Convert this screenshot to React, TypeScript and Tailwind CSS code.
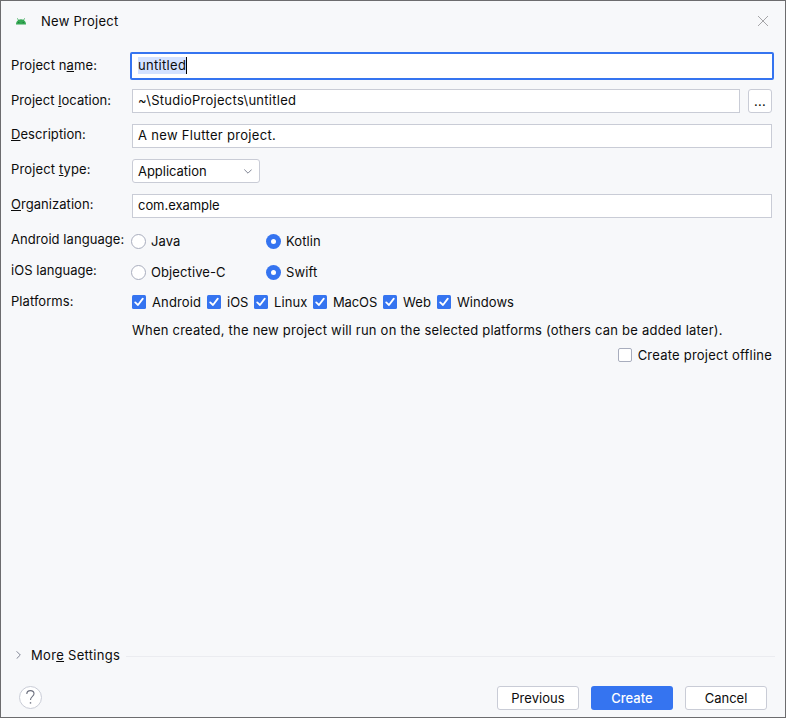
import React from "react";

function Label({ children, className = "" }: { children: React.ReactNode; className?: string }) {
  return <div className={`w-[121px] shrink-0 ${className}`}>{children}</div>;
}

function Key({ children }: { children: string }) {
  return (
    <span className="underline decoration-1 underline-offset-[1px] [text-decoration-skip-ink:none]">{children}</span>
  );
}

function Radio({ label, checked = false }: { label: string; checked?: boolean }) {
  return (
    <div className="flex h-4 w-[135px] items-center gap-[5px]">
      <svg width="15" height="15" viewBox="0 0 15 15" className="shrink-0">
        {checked ? (
          <>
            <circle cx="7.5" cy="7.5" r="7.5" fill="#3574f0" />
            <circle cx="7.5" cy="7.5" r="2.5" fill="#fff" />
          </>
        ) : (
          <circle cx="7.5" cy="7.5" r="7" fill="#fff" stroke="#a8adbd" />
        )}
      </svg>
      <span className="tracking-[0.1px]">{label}</span>
    </div>
  );
}

function Box({ checked = false }: { checked?: boolean }) {
  return (
    <svg width="14" height="14" viewBox="0 0 14 14" className="shrink-0">
      {checked ? (
        <>
          <rect width="14" height="14" rx="1.5" fill="#3574f0" />
          <path d="M3.2 7.4 6 10 10.8 3.6" fill="none" stroke="#fff" strokeWidth="1.8" strokeLinecap="round" strokeLinejoin="round" />
        </>
      ) : (
        <rect x="0.5" y="0.5" width="13" height="13" rx="1.5" fill="#fff" stroke="#a8adbd" />
      )}
    </svg>
  );
}

const platforms = [
  { name: "Android", width: "w-[75px]", tracking: "tracking-[0.12px]" },
  { name: "iOS", width: "w-[47px]", tracking: "tracking-[0px]" },
  { name: "Linux", width: "w-[59px]", tracking: "tracking-[0.08px]" },
  { name: "MacOS", width: "w-[70px]", tracking: "tracking-[-0.12px]" },
  { name: "Web", width: "w-[54px]", tracking: "tracking-[0.1px]" },
  { name: "Windows", width: "w-[80px]", tracking: "tracking-[0.05px]" },
];

export default function App() {
  return (
    <div className="flex h-[718px] w-[786px] flex-col border border-[#6c6c6e] bg-[#f7f8fa] font-['Inter',sans-serif] text-[13px] leading-4 tracking-[0.31px] whitespace-nowrap text-[#0c0c0c]">
      <header className="flex h-[40px] shrink-0 items-center pr-[17px] pl-[15px]">
        <svg width="10" height="7" viewBox="0 0 10 7" className="mt-px">
          <path d="M0 6.5C0 4.3 1 3 2 2.3L1 .3 1.4 0 2.6 1.8Q5 .9 7.4 1.8L8.6 0 9 .3 8 2.3C9 3 10 4.3 10 6.5Z" fill="#35a853" />
          <circle cx="2.8" cy="4.5" r=".6" fill="#176b34" />
          <circle cx="7.2" cy="4.5" r=".6" fill="#176b34" />
        </svg>
        <h1 className="ml-[15px] font-normal tracking-[0.27px]">New Project</h1>
        <svg width="10" height="10" viewBox="0 0 10 10" className="ml-auto" stroke="#a5a5a8" strokeWidth="1">
          <path d="M0 0 10 10M10 0 0 10" />
        </svg>
      </header>

      <main className="flex flex-col pt-[13px] pr-[13px] pl-[10px]">
        <div className="flex h-6 items-center">
          <Label className="mb-[3px] tracking-[0.12px]">Project n<Key>a</Key>me:</Label>
          <div className="-mx-[2px] flex h-7 flex-1 items-center rounded-[2px] border-2 border-[#3574f0] bg-white pl-[6px]">
            <span className="mb-px h-[17px] border-r border-black bg-[#d4e2ff]">untitled</span>
          </div>
        </div>
        <div className="mt-[11px] flex h-6 items-center">
          <Label className="mb-[3px] tracking-[0.05px]">Project <Key>l</Key>ocation:</Label>
          <div className="flex h-6 flex-1 items-center border border-[#c9ccd6] bg-white pb-[2px] pl-[5px] tracking-[0.27px]">~\StudioProjects\untitled</div>
          <button className="ml-2 h-6 w-6 rounded-[3px] border border-[#c9ccd6] bg-white">...</button>
        </div>
        <div className="mt-[11px] flex h-6 items-center">
          <Label className="mb-[5px] tracking-[0.06px]"><Key>D</Key>escription:</Label>
          <div className="flex h-6 flex-1 items-center border border-[#c9ccd6] bg-white pb-[2px] pl-[5px]">A new Flutter project.</div>
        </div>
        <div className="mt-[11px] flex h-6 items-center">
          <Label className="mb-[5px] tracking-[0.13px]">Project <Key>t</Key>ype:</Label>
          <div className="flex h-6 w-32 items-center justify-between rounded-[3px] border border-[#c9ccd6] bg-white pr-[7px] pl-[5px]">
            <span className="tracking-[-0.03px]">Application</span>
            <svg width="8" height="5" viewBox="0 0 8 5" fill="none" stroke="#818594" className="mt-px">
              <path d="M.3.5 4 4.2 7.7.5" />
            </svg>
          </div>
        </div>
        <div className="mt-[11px] flex h-6 items-center">
          <Label className="mb-[5px] tracking-[0.05px]"><Key>O</Key>rganization:</Label>
          <div className="flex h-6 flex-1 items-center border border-[#c9ccd6] bg-white pb-[2px] pl-[5px] tracking-[-0.05px]">com.example</div>
        </div>
        <div className="mt-[15px] flex h-4 items-center">
          <Label className="mb-[5px] tracking-[0.06px]">Android language:</Label>
          <div className="-ml-px flex"><Radio label="Java" /><Radio label="Kotlin" checked /></div>
        </div>
        <div className="mt-[15px] flex h-4 items-center">
          <Label className="mb-[5px] tracking-[0.03px]">iOS language:</Label>
          <div className="-ml-px flex"><Radio label="Objective-C" /><Radio label="Swift" checked /></div>
        </div>
        <div className="mt-[14px] flex h-4 items-center">
          <Label className="mb-[3px] tracking-[0.05px]">Platforms:</Label>
          {platforms.map((p) => (
            <div key={p.name} className={`flex items-center gap-[6px] ${p.width}`}>
              <Box checked />
              <span className={p.tracking}>{p.name}</span>
            </div>
          ))}
        </div>
        <p className="mt-3 ml-[121px] tracking-[0.215px]">When created, the new project will run on the selected platforms (others can be added later).</p>
        <div className="mt-[9px] flex items-center justify-end gap-[6px]">
          <Box />
          <span className="tracking-[0.22px]">Create project offline</span>
        </div>
      </main>

      <div className="mt-auto flex h-4 items-center pr-[10px] pl-[15px]">
        <svg width="5" height="8" viewBox="0 0 5 8" fill="none" stroke="#818594" className="mb-[2px]">
          <path d="M.6.3 4.3 4 .6 7.7" />
        </svg>
        <span className="mb-[2px] ml-[10px]">Mor<Key>e</Key> Settings</span>
        <div className="ml-[6px] h-px flex-1 bg-[#ebecf0]" />
      </div>
      <footer className="mt-[22px] mb-[7px] flex h-6 items-center pr-[18px] pl-[18px]">
        <svg width="23" height="23" viewBox="0 0 23 23" fill="none" className="mb-px">
          <circle cx="11.5" cy="11.5" r="11" fill="#fff" stroke="#c9ccd6" />
          <path d="M7.8 8.1C7.8 5.8 9.2 4.6 11.4 4.6S15 5.9 15 7.8C15 10.5 11.5 10.2 11.5 13.9" stroke="#6c707e" strokeWidth="1.1" />
          <rect x="10.8" y="16.2" width="1.4" height="1.4" fill="#6c707e" />
        </svg>
        <div className="ml-auto flex gap-3">
          <button className="h-6 w-[82px] rounded-[3px] border border-[#c9ccd6] bg-white tracking-[0.05px]">Previous</button>
          <button className="h-6 w-[82px] rounded-[3px] bg-[#3574f0] font-medium tracking-[0px] text-white">Create</button>
          <button className="h-6 w-[82px] rounded-[3px] border border-[#c9ccd6] bg-white tracking-[0px]">Cancel</button>
        </div>
      </footer>
    </div>
  );
}
